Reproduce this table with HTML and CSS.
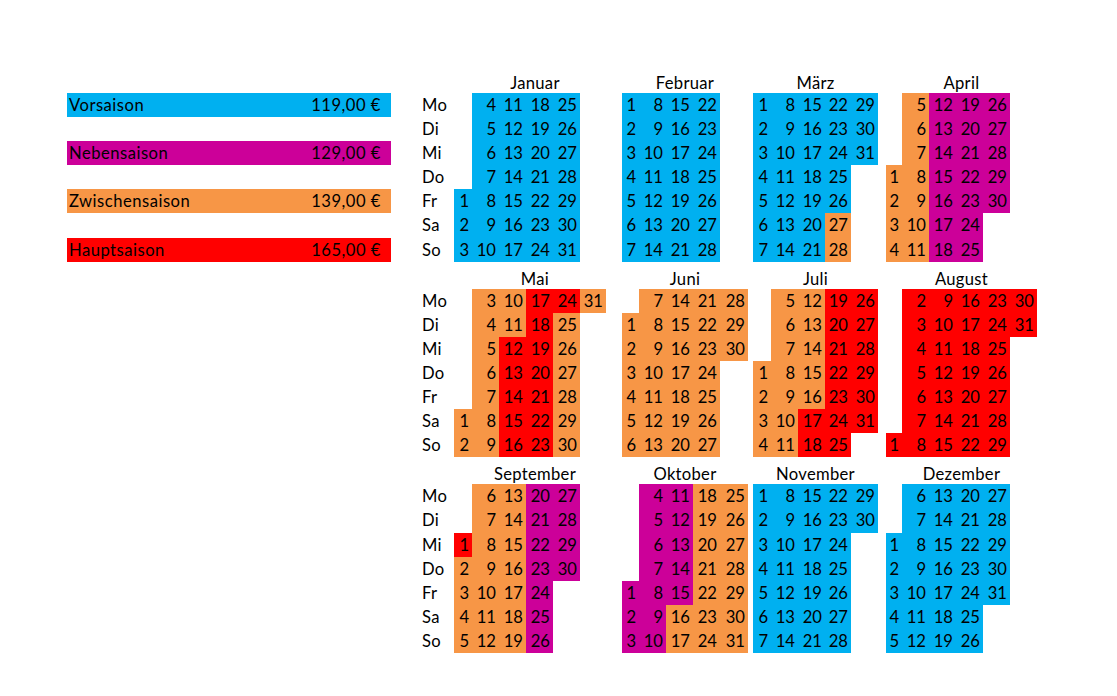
FILE: index.html
```html
<!DOCTYPE html>
<html lang="de">
<head>
<meta charset="utf-8">
<title>Saisonkalender</title>
<link rel="stylesheet" href="styles.css">
</head>
<body>
<div class="page">
  <aside class="legend">
    <div class="item b"><span>Vorsaison</span><span>119,00 €</span></div>
    <div class="item p"><span>Nebensaison</span><span>129,00 €</span></div>
    <div class="item o"><span>Zwischensaison</span><span>139,00 €</span></div>
    <div class="item r"><span>Hauptsaison</span><span>165,00 €</span></div>
  </aside>
  <main class="calendar">
    <section class="band">
      <div class="days"><div class="mtitle"></div><div class="dgrid"><span>Mo</span><span>Di</span><span>Mi</span><span>Do</span><span>Fr</span><span>Sa</span><span>So</span></div></div>
      <div class="month c1"><div class="mtitle">Januar</div><div class="mgrid">
        <i></i><i></i><i></i><i></i>
        <b class="b">1</b><b class="b">2</b><b class="b">3</b><b class="b">4</b><b class="b">5</b><b class="b">6</b><b class="b">7</b><b class="b">8</b><b class="b">9</b><b class="b">10</b>
        <b class="b">11</b><b class="b">12</b><b class="b">13</b><b class="b">14</b><b class="b">15</b><b class="b">16</b><b class="b">17</b><b class="b">18</b><b class="b">19</b><b class="b">20</b>
        <b class="b">21</b><b class="b">22</b><b class="b">23</b><b class="b">24</b><b class="b">25</b><b class="b">26</b><b class="b">27</b><b class="b">28</b><b class="b">29</b><b class="b">30</b><b class="b">31</b>
      </div></div>
      <div class="month c2"><div class="mtitle">Februar</div><div class="mgrid">
        <b class="b">1</b><b class="b">2</b><b class="b">3</b><b class="b">4</b><b class="b">5</b><b class="b">6</b><b class="b">7</b><b class="b">8</b><b class="b">9</b><b class="b">10</b>
        <b class="b">11</b><b class="b">12</b><b class="b">13</b><b class="b">14</b><b class="b">15</b><b class="b">16</b><b class="b">17</b><b class="b">18</b><b class="b">19</b><b class="b">20</b>
        <b class="b">21</b><b class="b">22</b><b class="b">23</b><b class="b">24</b><b class="b">25</b><b class="b">26</b><b class="b">27</b><b class="b">28</b>
      </div></div>
      <div class="month c3"><div class="mtitle">März</div><div class="mgrid">
        <b class="b">1</b><b class="b">2</b><b class="b">3</b><b class="b">4</b><b class="b">5</b><b class="b">6</b><b class="b">7</b><b class="b">8</b><b class="b">9</b><b class="b">10</b>
        <b class="b">11</b><b class="b">12</b><b class="b">13</b><b class="b">14</b><b class="b">15</b><b class="b">16</b><b class="b">17</b><b class="b">18</b><b class="b">19</b><b class="b">20</b>
        <b class="b">21</b><b class="b">22</b><b class="b">23</b><b class="b">24</b><b class="b">25</b><b class="b">26</b><b class="o">27</b><b class="o">28</b><b class="b">29</b><b class="b">30</b><b class="b">31</b>
      </div></div>
      <div class="month c4"><div class="mtitle">April</div><div class="mgrid">
        <i></i><i></i><i></i>
        <b class="o">1</b><b class="o">2</b><b class="o">3</b><b class="o">4</b><b class="o">5</b><b class="o">6</b><b class="o">7</b><b class="o">8</b><b class="o">9</b><b class="o">10</b>
        <b class="o">11</b><b class="p">12</b><b class="p">13</b><b class="p">14</b><b class="p">15</b><b class="p">16</b><b class="p">17</b><b class="p">18</b><b class="p">19</b><b class="p">20</b>
        <b class="p">21</b><b class="p">22</b><b class="p">23</b><b class="p">24</b><b class="p">25</b><b class="p">26</b><b class="p">27</b><b class="p">28</b><b class="p">29</b><b class="p">30</b>
      </div></div>
    </section>

    <section class="band">
      <div class="days"><div class="mtitle"></div><div class="dgrid"><span>Mo</span><span>Di</span><span>Mi</span><span>Do</span><span>Fr</span><span>Sa</span><span>So</span></div></div>
      <div class="month c1"><div class="mtitle">Mai</div><div class="mgrid">
        <i></i><i></i><i></i><i></i><i></i>
        <b class="o">1</b><b class="o">2</b><b class="o">3</b><b class="o">4</b><b class="o">5</b><b class="o">6</b><b class="o">7</b><b class="o">8</b><b class="o">9</b><b class="o">10</b>
        <b class="o">11</b><b class="r">12</b><b class="r">13</b><b class="r">14</b><b class="r">15</b><b class="r">16</b><b class="r">17</b><b class="r">18</b><b class="r">19</b><b class="r">20</b>
        <b class="r">21</b><b class="r">22</b><b class="r">23</b><b class="r">24</b><b class="o">25</b><b class="o">26</b><b class="o">27</b><b class="o">28</b><b class="o">29</b><b class="o">30</b><b class="o">31</b>
      </div></div>
      <div class="month c2"><div class="mtitle">Juni</div><div class="mgrid">
        <i></i>
        <b class="o">1</b><b class="o">2</b><b class="o">3</b><b class="o">4</b><b class="o">5</b><b class="o">6</b><b class="o">7</b><b class="o">8</b><b class="o">9</b><b class="o">10</b>
        <b class="o">11</b><b class="o">12</b><b class="o">13</b><b class="o">14</b><b class="o">15</b><b class="o">16</b><b class="o">17</b><b class="o">18</b><b class="o">19</b><b class="o">20</b>
        <b class="o">21</b><b class="o">22</b><b class="o">23</b><b class="o">24</b><b class="o">25</b><b class="o">26</b><b class="o">27</b><b class="o">28</b><b class="o">29</b><b class="o">30</b>
      </div></div>
      <div class="month c3"><div class="mtitle">Juli</div><div class="mgrid">
        <i></i><i></i><i></i>
        <b class="o">1</b><b class="o">2</b><b class="o">3</b><b class="o">4</b><b class="o">5</b><b class="o">6</b><b class="o">7</b><b class="o">8</b><b class="o">9</b><b class="o">10</b>
        <b class="o">11</b><b class="o">12</b><b class="o">13</b><b class="o">14</b><b class="o">15</b><b class="o">16</b><b class="r">17</b><b class="r">18</b><b class="r">19</b><b class="r">20</b>
        <b class="r">21</b><b class="r">22</b><b class="r">23</b><b class="r">24</b><b class="r">25</b><b class="r">26</b><b class="r">27</b><b class="r">28</b><b class="r">29</b><b class="r">30</b><b class="r">31</b>
      </div></div>
      <div class="month c4"><div class="mtitle">August</div><div class="mgrid">
        <i></i><i></i><i></i><i></i><i></i><i></i>
        <b class="r">1</b><b class="r">2</b><b class="r">3</b><b class="r">4</b><b class="r">5</b><b class="r">6</b><b class="r">7</b><b class="r">8</b><b class="r">9</b><b class="r">10</b>
        <b class="r">11</b><b class="r">12</b><b class="r">13</b><b class="r">14</b><b class="r">15</b><b class="r">16</b><b class="r">17</b><b class="r">18</b><b class="r">19</b><b class="r">20</b>
        <b class="r">21</b><b class="r">22</b><b class="r">23</b><b class="r">24</b><b class="r">25</b><b class="r">26</b><b class="r">27</b><b class="r">28</b><b class="r">29</b><b class="r">30</b><b class="r">31</b>
      </div></div>
    </section>

    <section class="band">
      <div class="days"><div class="mtitle"></div><div class="dgrid"><span>Mo</span><span>Di</span><span>Mi</span><span>Do</span><span>Fr</span><span>Sa</span><span>So</span></div></div>
      <div class="month c1"><div class="mtitle">September</div><div class="mgrid">
        <i></i><i></i>
        <b class="r">1</b><b class="o">2</b><b class="o">3</b><b class="o">4</b><b class="o">5</b><b class="o">6</b><b class="o">7</b><b class="o">8</b><b class="o">9</b><b class="o">10</b>
        <b class="o">11</b><b class="o">12</b><b class="o">13</b><b class="o">14</b><b class="o">15</b><b class="o">16</b><b class="o">17</b><b class="o">18</b><b class="o">19</b><b class="p">20</b>
        <b class="p">21</b><b class="p">22</b><b class="p">23</b><b class="p">24</b><b class="p">25</b><b class="p">26</b><b class="p">27</b><b class="p">28</b><b class="p">29</b><b class="p">30</b>
      </div></div>
      <div class="month c2"><div class="mtitle">Oktober</div><div class="mgrid">
        <i></i><i></i><i></i><i></i>
        <b class="p">1</b><b class="p">2</b><b class="p">3</b><b class="p">4</b><b class="p">5</b><b class="p">6</b><b class="p">7</b><b class="p">8</b><b class="p">9</b><b class="p">10</b>
        <b class="p">11</b><b class="p">12</b><b class="p">13</b><b class="p">14</b><b class="p">15</b><b class="o">16</b><b class="o">17</b><b class="o">18</b><b class="o">19</b><b class="o">20</b>
        <b class="o">21</b><b class="o">22</b><b class="o">23</b><b class="o">24</b><b class="o">25</b><b class="o">26</b><b class="o">27</b><b class="o">28</b><b class="o">29</b><b class="o">30</b><b class="o">31</b>
      </div></div>
      <div class="month c3"><div class="mtitle">November</div><div class="mgrid">
        <b class="b">1</b><b class="b">2</b><b class="b">3</b><b class="b">4</b><b class="b">5</b><b class="b">6</b><b class="b">7</b><b class="b">8</b><b class="b">9</b><b class="b">10</b>
        <b class="b">11</b><b class="b">12</b><b class="b">13</b><b class="b">14</b><b class="b">15</b><b class="b">16</b><b class="b">17</b><b class="b">18</b><b class="b">19</b><b class="b">20</b>
        <b class="b">21</b><b class="b">22</b><b class="b">23</b><b class="b">24</b><b class="b">25</b><b class="b">26</b><b class="b">27</b><b class="b">28</b><b class="b">29</b><b class="b">30</b>
      </div></div>
      <div class="month c4"><div class="mtitle">Dezember</div><div class="mgrid">
        <i></i><i></i>
        <b class="b">1</b><b class="b">2</b><b class="b">3</b><b class="b">4</b><b class="b">5</b><b class="b">6</b><b class="b">7</b><b class="b">8</b><b class="b">9</b><b class="b">10</b>
        <b class="b">11</b><b class="b">12</b><b class="b">13</b><b class="b">14</b><b class="b">15</b><b class="b">16</b><b class="b">17</b><b class="b">18</b><b class="b">19</b><b class="b">20</b>
        <b class="b">21</b><b class="b">22</b><b class="b">23</b><b class="b">24</b><b class="b">25</b><b class="b">26</b><b class="b">27</b><b class="b">28</b><b class="b">29</b><b class="b">30</b><b class="b">31</b>
      </div></div>
    </section>
  </main>
</div>
</body>
</html>
```

FILE: styles.css
```css
* { box-sizing: border-box; }

html, body {
  margin: 0;
  background: #fff;
}

body {
  font-family: Lato, "Open Sans", sans-serif;
  font-size: 16.6px;
  color: #000;
}

.page {
  display: flex;
  align-items: flex-start;
  padding-top: 66px;
  padding-left: 67px;
}

.legend {
  width: 324px;
  margin-right: 29px;
  padding-top: 27px;
  display: flex;
  flex-direction: column;
  gap: 24.1px;
}

.legend .item {
  height: 24.1px;
  line-height: 25px;
  display: flex;
  justify-content: space-between;
  padding: 0 10px 0 2px;
  letter-spacing: 0.5px;
}

.b { background: #00b0f0; }
.p { background: #cc0099; }
.o { background: #f79646; }
.r { background: #ff0000; }

.calendar {
  display: flex;
  flex-direction: column;
}

.band {
  display: flex;
}

.mtitle {
  height: 27px;
  line-height: 20px;
  display: flex;
  align-items: flex-end;
  justify-content: center;
  letter-spacing: 0.3px;
}

.days {
  width: 34px;
}

.dgrid {
  display: grid;
  grid-template-rows: repeat(7, 24.1px);
}

.dgrid span {
  line-height: 25px;
  padding-left: 2px;
  letter-spacing: 0.3px;
}

.mgrid {
  display: grid;
  grid-template-rows: repeat(7, 24.1px);
  grid-auto-flow: column;
}

.mgrid b {
  font-weight: normal;
  text-align: right;
  padding-right: 3px;
  line-height: 25px;
}

.c1 .mgrid { grid-template-columns: 18px 27px 27px 27px 27px 26px; }
.c1 { margin-right: 16px; }
.c1 .mtitle { padding-left: 10px; }

.c2 .mgrid { grid-template-columns: 17px 27px 27px 27px 28px; }
.c2 { margin-right: 5px; }

.c3 .mgrid { grid-template-columns: 18px 27px 27px 26px 27px; }
.c3 { margin-right: 8px; }

.c4 .mgrid { grid-template-columns: 16px 27px 27px 27px 27px 27px; }
```
